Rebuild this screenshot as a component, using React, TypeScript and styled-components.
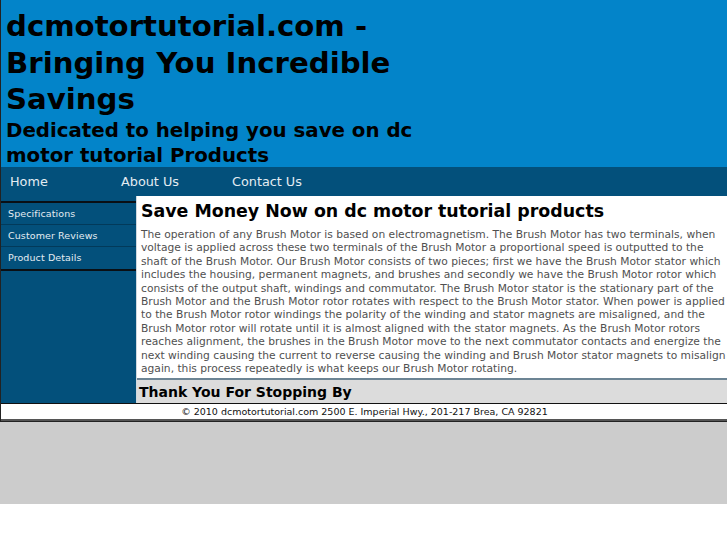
import React from "react";
import styled, { createGlobalStyle } from "styled-components";

const Global = createGlobalStyle`
  html, body { margin: 0; padding: 0; background: #fff; overflow: hidden; }
  body { font-family: "DejaVu Sans", sans-serif; }
`;

const Wrapper = styled.div`
  width: 729px;
  box-sizing: border-box;
  border: 1px solid #222;
  border-top: none;
  background: #fff;
`;

const Header = styled.header`
  background: #0384c9;
  padding: 8px 5px 0 5px;
  height: 159px;
`;

const SiteTitle = styled.h1`
  margin: 0;
  font-size: 29.2px;
  line-height: 36.5px;
  font-weight: bold;
  color: #000;
  width: 420px;
`;

const Tagline = styled.h2`
  margin: 0;
  font-size: 19.8px;
  line-height: 25px;
  font-weight: bold;
  color: #000;
  width: 420px;
`;

const Nav = styled.nav`
  display: flex;
  background: #03507b;
  height: 29px;
  align-items: center;
`;

const NavLink = styled.a`
  width: 111px;
  padding-left: 9px;
  box-sizing: border-box;
  font-size: 12.8px;
  color: #e4ecf2;
  text-decoration: none;
`;

const Body = styled.div`
  display: flex;
`;

const Sidebar = styled.aside`
  width: 135px;
  background: #03507b;
  padding-top: 5px;
  box-sizing: border-box;
`;

const Menu = styled.ul`
  list-style: none;
  margin: 0;
  padding: 0;
  border-top: 2px solid #0a0f14;
  border-bottom: 2px solid #0a0f14;
`;

const MenuItem = styled.li<{ $last?: boolean }>`
  display: flex;
  align-items: center;
  padding-left: 7px;
  padding-bottom: 1px;
  box-sizing: border-box;
  height: 22px;
  font-size: 9.5px;
  letter-spacing: 0.1px;
  color: #e4ecf2;
  border-bottom: ${(p) => (p.$last ? "none" : "1px solid #023a5a")};
`;

const Main = styled.main`
  flex: 1;
  background: #fff;
  border-left: 1px solid #cfd8df;
  display: flex;
  flex-direction: column;
`;

const Article = styled.section`
  padding: 4px 2px 3px 4px;
`;

const Heading = styled.h3`
  margin: 0 0 6px 0;
  font-size: 17.4px;
  line-height: 22px;
  font-weight: bold;
  color: #000;
`;

const Para = styled.p`
  margin: 0;
  font-size: 10.7px;
  line-height: 13.4px;
  color: #505050;
`;

const ThanksBar = styled.div`
  background: #dcdcdc;
  border-top: 2px solid #6c8494;
  height: 23px;
  display: flex;
  align-items: center;
  padding-left: 2px;
  font-size: 14px;
  font-weight: bold;
  color: #000;
`;

const Footer = styled.footer`
  border-top: 1px solid #111;
  border-bottom: 2px solid #555;
  height: 15px;
  display: flex;
  align-items: center;
  justify-content: center;
  font-size: 9.5px;
  color: #111;
`;

const Filler = styled.div`
  height: 82px;
  background: #cccccc;
`;

const text =
  "The operation of any Brush Motor is based on electromagnetism. The Brush Motor has two terminals, when voltage is applied across these two terminals of the Brush Motor a proportional speed is outputted to the shaft of the Brush Motor. Our Brush Motor consists of two pieces; first we have the Brush Motor stator which includes the housing, permanent magnets, and brushes and secondly we have the Brush Motor rotor which consists of the output shaft, windings and commutator. The Brush Motor stator is the stationary part of the Brush Motor and the Brush Motor rotor rotates with respect to the Brush Motor stator. When power is applied to the Brush Motor rotor windings the polarity of the winding and stator magnets are misaligned, and the Brush Motor rotor will rotate until it is almost aligned with the stator magnets. As the Brush Motor rotors reaches alignment, the brushes in the Brush Motor move to the next commutator contacts and energize the next winding causing the current to reverse causing the winding and Brush Motor stator magnets to misalign again, this process repeatedly is what keeps our Brush Motor rotating.";

export default function App() {
  return (
    <>
      <Global />
      <Wrapper>
        <Header>
          <SiteTitle>dcmotortutorial.com - Bringing You Incredible Savings</SiteTitle>
          <Tagline>Dedicated to helping you save on dc motor tutorial Products</Tagline>
        </Header>
        <Nav>
          <NavLink href="#">Home</NavLink>
          <NavLink href="#">About Us</NavLink>
          <NavLink href="#">Contact Us</NavLink>
        </Nav>
        <Body>
          <Sidebar>
            <Menu>
              <MenuItem>Specifications</MenuItem>
              <MenuItem>Customer Reviews</MenuItem>
              <MenuItem $last>Product Details</MenuItem>
            </Menu>
          </Sidebar>
          <Main>
            <Article>
              <Heading>Save Money Now on dc motor tutorial products</Heading>
              <Para>{text}</Para>
            </Article>
            <ThanksBar>Thank You For Stopping By</ThanksBar>
          </Main>
        </Body>
        <Footer>© 2010 dcmotortutorial.com 2500 E. Imperial Hwy., 201-217 Brea, CA 92821</Footer>
      </Wrapper>
      <Filler />
    </>
  );
}
